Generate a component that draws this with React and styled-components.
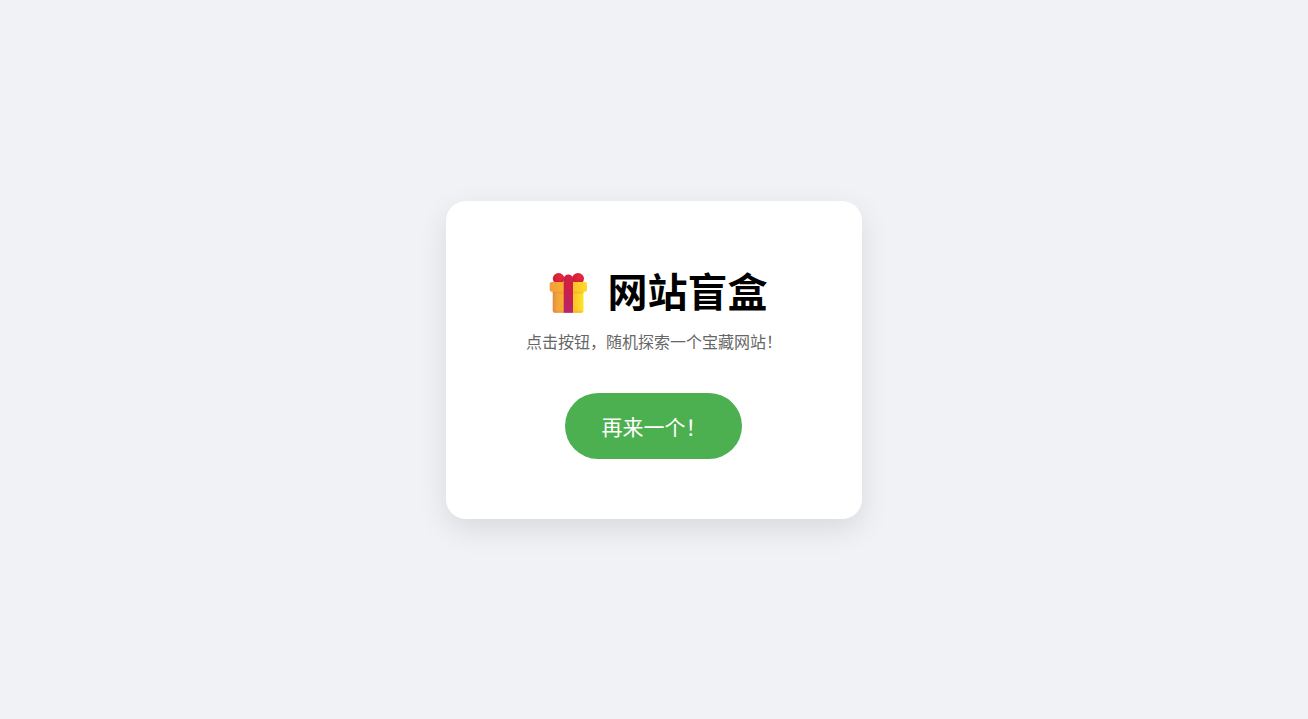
import { useState } from "react";
import styled, { createGlobalStyle } from "styled-components";

const GlobalStyle = createGlobalStyle`
  body {
    margin: 0;
    background-color: #f0f2f5;
    font-family: "Liberation Sans", "Noto Sans CJK SC", sans-serif;
  }
`;

const Page = styled.main`
  min-height: 100vh;
  display: flex;
  justify-content: center;
  align-items: center;
`;

const Card = styled.section`
  padding: 60px 80px;
  background-color: white;
  border-radius: 20px;
  box-shadow: 0 10px 30px rgba(0, 0, 0, 0.1);
  text-align: center;
`;

const Title = styled.h1`
  margin: 0 0 10px;
  font-size: 40px;
  color: black;
`;

const Gift = styled.svg`
  width: 40px;
  height: 40px;
  margin: 0 8px;
  vertical-align: -6px;
`;

const Subtitle = styled.p`
  margin: 0 0 40px;
  font-size: 16px;
  color: #666;
`;

const DrawButton = styled.button`
  padding: 18px 36px;
  border: none;
  border-radius: 50px;
  background-color: #4caf50;
  color: white;
  font-family: inherit;
  font-size: 21px;
  cursor: pointer;

  &:hover {
    background-color: #45a049;
  }
`;

const sites = [
  "https://neal.fun",
  "https://www.windy.com",
  "https://radio.garden",
];

const GiftIcon = () => (
  <Gift viewBox="-1 0 40 40" aria-hidden="true">
    <defs>
      <linearGradient id="lid" x1="0" x2="1">
        <stop offset="0" stopColor="#ee9c40" />
        <stop offset="0.3" stopColor="#f8ad30" />
        <stop offset="0.7" stopColor="#fcc528" />
        <stop offset="1" stopColor="#ffdc2a" />
      </linearGradient>
      <linearGradient id="box" x1="0" x2="1">
        <stop offset="0" stopColor="#e08a4a" />
        <stop offset="0.15" stopColor="#f3a43a" />
        <stop offset="0.4" stopColor="#f7b02e" />
        <stop offset="0.75" stopColor="#fccb26" />
        <stop offset="1" stopColor="#ffe32c" />
      </linearGradient>
      <linearGradient id="shade" x1="0" x2="0" y1="0" y2="1">
        <stop offset="0" stopColor="#e07a20" stopOpacity="0.55" />
        <stop offset="0.2" stopColor="#e07a20" stopOpacity="0" />
        <stop offset="0.88" stopColor="#e07a20" stopOpacity="0" />
        <stop offset="1" stopColor="#e07a20" stopOpacity="0.4" />
      </linearGradient>
      <linearGradient id="ribbon" x1="0" x2="0" y1="0" y2="1">
        <stop offset="0" stopColor="#d42240" />
        <stop offset="0.4" stopColor="#cc1f48" />
        <stop offset="1" stopColor="#b4266f" />
      </linearGradient>
      <radialGradient id="bow" cx="0.65" cy="0.35" r="0.7">
        <stop offset="0" stopColor="#e62a3c" />
        <stop offset="1" stopColor="#cb1c34" />
      </radialGradient>
    </defs>
    <rect x="3.7" y="15" width="30.8" height="24.8" rx="2" fill="url(#box)" />
    <rect x="3.7" y="17" width="30.8" height="22.8" rx="2" fill="url(#shade)" />
    <ellipse cx="9.6" cy="5.6" rx="5.8" ry="5.6" fill="url(#bow)" />
    <ellipse cx="29" cy="5.6" rx="6" ry="5.6" fill="url(#bow)" />
    <rect x="0.7" y="9" width="37.3" height="9.8" rx="1.8" fill="url(#lid)" />
    <path
      d="M14.7 39.8V5.8a4.65 4.3 0 0 1 9.3 0v34z"
      fill="url(#ribbon)"
    />
  </Gift>
);

const App = () => {
  const [lastSite, setLastSite] = useState("");

  function handleDraw() {
    // don't open the same site twice in a row
    const options = sites.filter((site) => site !== lastSite);
    const site = options[Math.floor(Math.random() * options.length)];

    setLastSite(site);
    window.open(site, "_blank");
  }

  return (
    <Page lang="zh-CN">
      <GlobalStyle />
      <Card>
        <Title>
          <GiftIcon /> 网站盲盒
        </Title>
        <Subtitle>点击按钮，随机探索一个宝藏网站！</Subtitle>
        <DrawButton type="button" onClick={handleDraw}>
          再来一个！
        </DrawButton>
      </Card>
    </Page>
  );
};

export default App;
